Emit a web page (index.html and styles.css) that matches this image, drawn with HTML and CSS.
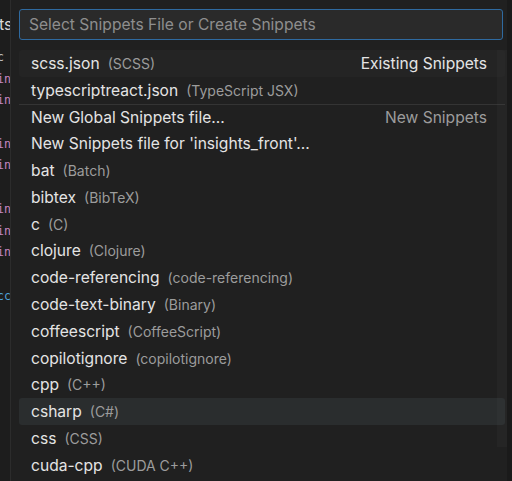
FILE: index.html
```html
<!DOCTYPE html>
<html>
<head>
<meta charset="utf-8">
<link rel="stylesheet" href="styles.css">
</head>
<body>
<div class="screen">
  <div class="gutter">
    <div class="tabtext">ts</div>
    <div class="line plain">c</div>
    <div class="line kw">in</div>
    <div class="line kw">in</div>
    <div class="line"></div>
    <div class="line kw">in</div>
    <div class="line kw">in</div>
    <div class="line"></div>
    <div class="line kw">in</div>
    <div class="line kw">in</div>
    <div class="line kw">in</div>
    <div class="line"></div>
    <div class="line fn">cc</div>
  </div>
  <div class="picker">
    <div class="input">Select Snippets File or Create Snippets</div>
    <div class="list">
      <div class="row first"><span class="label">scss.json</span><span class="desc">(SCSS)</span><span class="sep-label bright">Existing Snippets</span></div>
      <div class="row"><span class="label">typescriptreact.json</span><span class="desc">(TypeScript JSX)</span></div>
      <div class="row separated"><span class="label">New Global Snippets file...</span><span class="sep-label">New Snippets</span></div>
      <div class="row"><span class="label">New Snippets file for 'insights_front'...</span></div>
      <div class="row"><span class="label">bat</span><span class="desc">(Batch)</span></div>
      <div class="row"><span class="label">bibtex</span><span class="desc">(BibTeX)</span></div>
      <div class="row"><span class="label">c</span><span class="desc">(C)</span></div>
      <div class="row"><span class="label">clojure</span><span class="desc">(Clojure)</span></div>
      <div class="row"><span class="label">code-referencing</span><span class="desc">(code-referencing)</span></div>
      <div class="row"><span class="label">code-text-binary</span><span class="desc">(Binary)</span></div>
      <div class="row"><span class="label">coffeescript</span><span class="desc">(CoffeeScript)</span></div>
      <div class="row"><span class="label">copilotignore</span><span class="desc">(copilotignore)</span></div>
      <div class="row"><span class="label">cpp</span><span class="desc">(C++)</span></div>
      <div class="row hover"><span class="label">csharp</span><span class="desc">(C#)</span></div>
      <div class="row"><span class="label">css</span><span class="desc">(CSS)</span></div>
      <div class="row"><span class="label">cuda-cpp</span><span class="desc">(CUDA C++)</span></div>
    </div>
    <div class="scrollbar"></div>
  </div>
  <div class="edge"></div>
</div>
</body>
</html>
```
FILE: styles.css
```css
html, body {
  margin: 0;
  padding: 0;
  background: #1b1b1b;
}
.screen {
  width: 512px;
  height: 481px;
  overflow: hidden;
  display: flex;
  font-family: Inter, "Noto Sans", sans-serif;
}
.gutter {
  width: 10px;
  flex: none;
  background: #1d1d1d;
  overflow: hidden;
  display: flex;
  flex-direction: column;
}
.tabtext {
  height: 47px;
  box-sizing: border-box;
  padding-top: 14px;
  line-height: 20px;
  font-size: 16px;
  color: #d8d8d8;
  margin-left: -1px;
  white-space: nowrap;
}
.line {
  height: 21.7px;
  line-height: 21.7px;
  font-family: "DejaVu Sans Mono", monospace;
  font-size: 11.5px;
  white-space: nowrap;
  margin-left: -3px;
}
.plain { color: #bdbdbd; }
.kw { color: #c586c0; }
.fn { color: #4fa3d8; }
.picker {
  position: relative;
  width: 497px;
  flex: none;
  background: #202020;
  border-left: 1px solid #2c2c2c;
  padding-top: 9px;
  box-sizing: border-box;
}
.input {
  height: 31px;
  margin: 0 4px 0 8px;
  box-sizing: border-box;
  border: 1px solid #2f6aa0;
  border-radius: 3px;
  background: #2a2a2a;
  color: #8e8e8e;
  font-size: 15.6px;
  line-height: 29px;
  padding-left: 9px;
  white-space: nowrap;
}
.list {
  margin: 10px 2px 0 8px;
}
.row {
  height: 26.8px;
  display: flex;
  align-items: center;
  padding: 0 18px 0 12px;
  white-space: nowrap;
  box-sizing: border-box;
  border-radius: 3px;
}
.row.first {
  background: #242424;
}
.row.hover {
  background: #2a2d2e;
}
.row.separated {
  border-top: 1px solid #343434;
  border-radius: 0;
}
.label {
  color: #e4e4e4;
  font-size: 15.6px;
}
.desc {
  color: #9c9c9c;
  font-size: 14px;
  margin-left: 8px;
}
.sep-label {
  margin-left: auto;
  color: #9c9c9c;
  font-size: 15.6px;
}
.sep-label.bright {
  color: #e4e4e4;
}
.scrollbar {
  position: absolute;
  right: 0;
  top: 50px;
  width: 10px;
  height: 397px;
  background: rgba(121, 121, 121, 0.06);
}
.edge {
  flex: 1;
  background: #1a1a1a;
}
```
